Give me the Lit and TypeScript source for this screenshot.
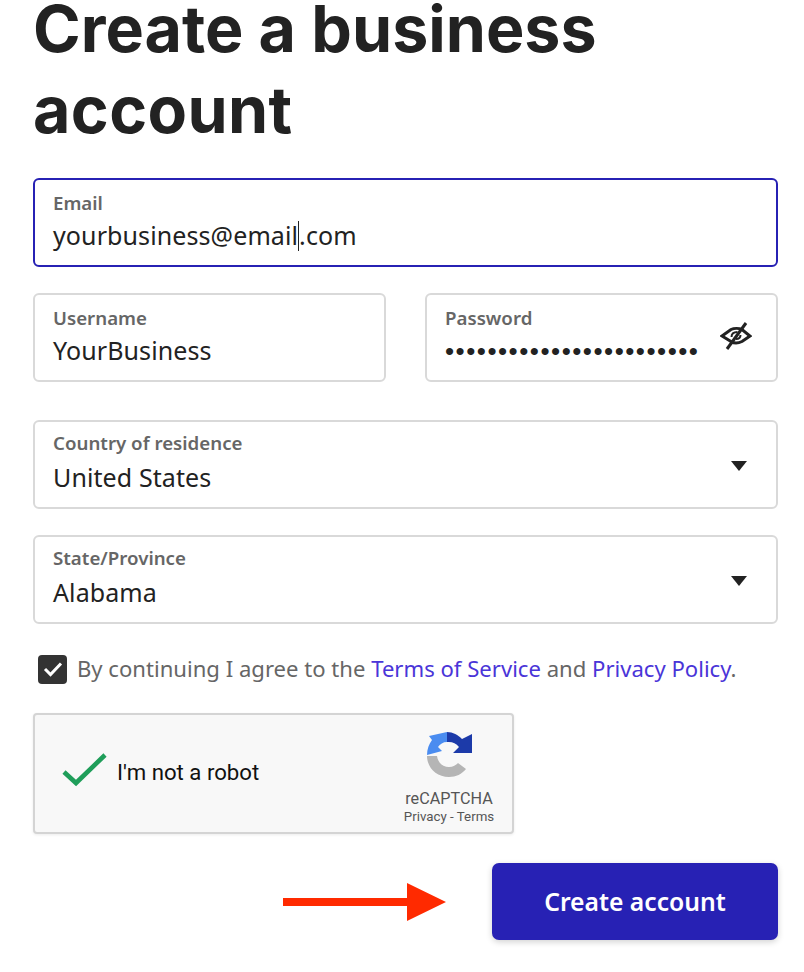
import { LitElement, html, css } from "lit";
import { customElement } from "lit/decorators.js";

@customElement("app-root")
export class AppRoot extends LitElement {
  static styles = css`
    :host { display: block; width: 804px; height: 972px; overflow: hidden; background: #fff; font-family: "Noto Sans", "Open Sans", sans-serif; color: #222; }
    * { box-sizing: border-box; }
    .page { padding: 0 26px 0 33px; display: flex; flex-direction: column; }
    h1 { margin: 0 0 27px; font-family: Inter, sans-serif; font-weight: 700; font-size: 64.5px; color: #222; width: 700px; }
    h1 span { display: block; white-space: nowrap; }
    h1 .l1 { line-height: 59px; margin-bottom: 11px; }
    h1 .l2 { line-height: 81px; letter-spacing: .4px; }
    .field { height: 89px; border: 2px solid #d9d9d9; border-radius: 6px; padding: 11px 18px 0; display: flex; align-items: center; background: #fff; }
    .field .col { flex: 1; min-width: 0; align-self: flex-start; display: flex; flex-direction: column; }
    .field.focus { border-color: #2721b4; }
    .field.select { padding-top: 9px; }
    .field.select .value { margin-top: 5px; }
    label { font-size: 18.7px; line-height: 24px; font-weight: 600; color: #666; }
    .value { font-size: 25px; line-height: 34px; margin-top: 3px; letter-spacing: .1px; color: #222; white-space: nowrap; display: flex; }
    .caret { display: inline-block; width: 0; height: 30px; border-left: 1.5px solid #222; margin-top: 3px; }
    .row { display: grid; grid-template-columns: 353px 353px; gap: 39px; margin-top: 26px; }
    .stack { margin-top: 38px; display: flex; flex-direction: column; gap: 26px; }
    .dots { font-family: "Liberation Sans", sans-serif; font-size: 26px; line-height: 34px; margin-top: 4px; letter-spacing: 1.5px; color: #222; white-space: nowrap; }
    .eye { width: 32px; height: 28px; margin-top: -14px; margin-right: 6px; flex: none; }
    .caret-down { width: 0; height: 0; border-left: 8px solid transparent; border-right: 8px solid transparent; border-top: 10px solid #222; margin-top: -6px; margin-right: 11px; flex: none; }
    .agree { display: flex; align-items: center; gap: 10px; margin-top: 31px; padding-left: 5px; height: 28px; font-size: 22.1px; color: #666; white-space: nowrap; }
    .agree .text { margin-top: -2px; }
    .agree a { color: #4a35d8; text-decoration: none; }
    .box { width: 29px; height: 29px; border-radius: 4px; background: #333; display: flex; align-items: center; justify-content: center; flex: none; }
    .captcha { margin-top: 30px; width: 481px; height: 121px; background: #f8f8f8; border: 2px solid #d4d4d4; border-radius: 4px; display: flex; align-items: center; padding: 0 18px 0 26px; box-shadow: 0 1px 3px rgba(0,0,0,.08); }
    .check { width: 46px; height: 36px; flex: none; margin-right: 10px; margin-top: -9px; }
    .robot { font-family: Roboto, sans-serif; font-size: 22.2px; color: #111; flex: 1; margin-top: -4px; }
    .brand { display: flex; flex-direction: column; align-items: center; width: 92px; font-family: Roboto, sans-serif; color: #555; margin-right: -1px; margin-top: 10px; }
    .brand svg { width: 46px; height: 46px; margin-bottom: 12px; }
    .brand .name { font-size: 16.2px; line-height: 19px; }
    .brand .links { font-size: 13.3px; line-height: 18px; white-space: nowrap; }
    .actions { margin-top: 29px; display: flex; justify-content: flex-end; align-items: center; gap: 46px; }
    .arrow { width: 163px; height: 40px; flex: none; }
    button { width: 286px; height: 77px; border: 0; border-radius: 7px; background: #2721b4; color: #fff; font: 600 24.7px "Noto Sans", sans-serif; box-shadow: 0 2px 6px rgba(0,0,0,.18); }
  `;

  render() {
    return html`<div class="page">
      <h1><span class="l1">Create a business</span><span class="l2">account</span></h1>
      <div class="field focus"><div class="col"><label>Email</label><div class="value">yourbusiness@email<span class="caret"></span>.com</div></div></div>
      <div class="row">
        <div class="field"><div class="col"><label>Username</label><div class="value">YourBusiness</div></div></div>
        <div class="field"><div class="col"><label>Password</label><div class="dots">••••••••••••••••••••••••</div></div>
          <svg class="eye" viewBox="0 0 32 28" fill="none" stroke="#222" stroke-width="3" stroke-linejoin="miter">
            <path d="M2 14 L11 7.5 C14 6 19 6 22 7.5 L30 14 L22 19.5 C18 21.5 14 21.5 11 19.5 Z"/>
            <path d="M11.5 15 C11.5 11.5 14 10 17.5 10 M20.5 13 C20.5 15.5 18.5 17 16 17" stroke-width="2"/>
            <path d="M26 1 L7 27" stroke-width="3"/>
          </svg>
        </div>
      </div>
      <div class="stack">
        <div class="field select"><div class="col"><label>Country of residence</label><div class="value">United States</div></div><span class="caret-down"></span></div>
        <div class="field select"><div class="col"><label>State/Province</label><div class="value">Alabama</div></div><span class="caret-down"></span></div>
      </div>
      <div class="agree"><span class="box"><svg width="20" height="16" viewBox="0 0 20 16" fill="none" stroke="#fff" stroke-width="3"><path d="M2 8 L7.5 13.5 L18 2.5"/></svg></span><span class="text">By continuing I agree to the <a>Terms of Service</a> and <a>Privacy Policy</a>.</span></div>
      <div class="captcha">
        <svg class="check" viewBox="0 0 46 36" fill="none" stroke="#1f9e5a" stroke-width="4.6"><path d="M3 21 L15 32 L44 4"/></svg>
        <span class="robot">I'm not a robot</span>
        <div class="brand">
          <svg viewBox="0 0 46 46">
            <path d="M1 24 C1 18 3 13 6 9 L3 5 L21 1 L21 11 C17 11 14 13 12 16 L16 20 L1 24Z" fill="#4a8cf0"/>
            <path d="M21 1 C27 1 32 4 36 8 L46 3 L46 22 L27 22 L33 16 C30 12 26 10.5 21 11Z" fill="#1c3aa9"/>
            <path d="M1 25 L11 25 C12 32 17 36 23 36 C27 36 30 34 32 32 L28 29 L40 38 C36 43 30 46 23 46 C10 46 1 36 1 25Z" fill="#b5b5b5"/>
          </svg>
          <span class="name">reCAPTCHA</span>
          <span class="links">Privacy - Terms</span>
        </div>
      </div>
      <div class="actions">
        <svg class="arrow" viewBox="0 0 163 40"><path d="M0 16 H124 V1 L163 20 L124 39 V24 H0Z" fill="#ff2a00"/></svg>
        <button>Create account</button>
      </div>
    </div>`;
  }
}
